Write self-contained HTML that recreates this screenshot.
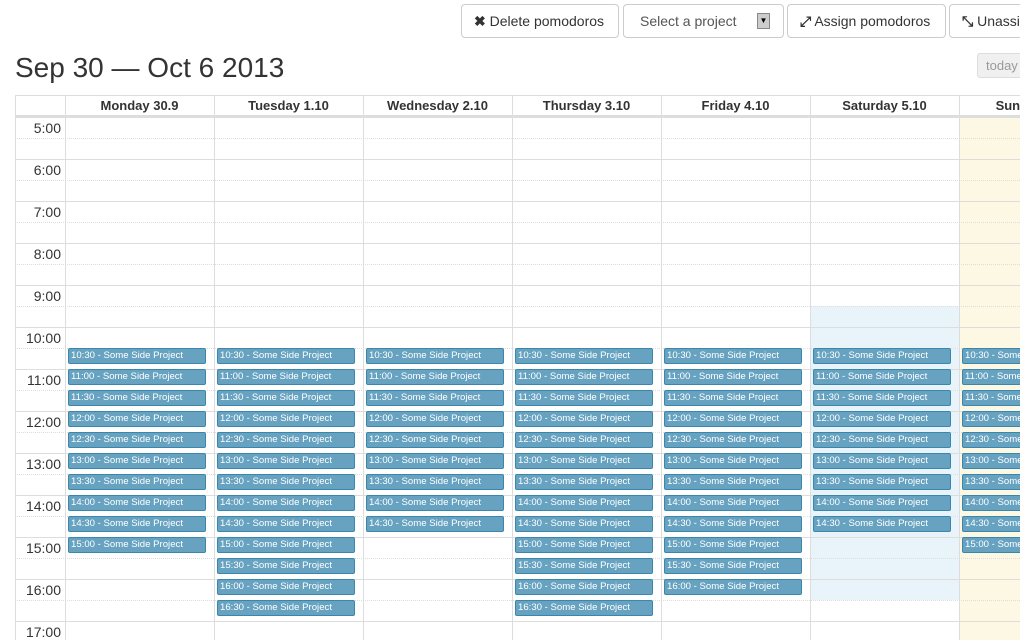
<!DOCTYPE html>
<html><head><meta charset="utf-8"><style>
body{margin:0;width:1020px;height:640px;overflow:hidden;background:#fff;font-family:"Liberation Sans",sans-serif;color:#333;position:relative}
.btn{position:absolute;top:4px;border:1px solid #ccc;border-radius:4px;background:#fff;font-size:14px;line-height:32px;box-sizing:border-box;height:34px;padding-left:12px;white-space:nowrap;overflow:hidden;color:#333}
.abs{position:absolute}
.hd{position:absolute;top:96px;height:20px;font-weight:bold;font-size:13px;text-align:center;line-height:20px;color:#333}
.vl{position:absolute;width:1px;background:#ddd;top:95px;height:545px}
.hl{position:absolute;left:15px;right:0;height:1px;background:#ddd}
.dl{position:absolute;left:15px;right:0;height:0;border-top:1px dotted #ddd}
.tm{position:absolute;left:15px;width:46px;text-align:right;font-size:14px;color:#333}
.ev{position:absolute;height:14px;background:#67a3c1;border:1px solid #3a87ad;border-radius:2px;color:#fff;font-size:9.6px;line-height:14px;padding-left:2px;white-space:nowrap;overflow:hidden;box-sizing:content-box}
</style></head><body>
<div class="btn" style="left:461px;width:158px"><b>&#10006;</b> Delete pomodoros</div>
<div class="btn" style="left:623px;width:161px;padding-left:16px;color:#555">Select a project<span class="abs" style="left:133px;top:8px;width:13px;height:16px;background:#ccc;border:1px solid #888;box-sizing:border-box;font-size:8px;line-height:14px;text-align:center;color:#000">&#9660;</span></div>
<div class="btn" style="left:787px;width:159px"><b>&#10530;</b> Assign pomodoros</div>
<div class="btn" style="left:949px;width:80px"><b>&#10529;</b> Unassign</div>
<div class="abs" style="left:15px;top:52px;font-size:28px;color:#333">Sep 30 — Oct 6 2013</div>
<div class="abs" style="left:977px;top:53px;width:50px;height:25px;background:#f0f0f0;border:1px solid #ddd;border-radius:3px;box-sizing:border-box;color:#999;font-size:13px;line-height:23px;padding-left:8px">today</div>
<div id="g"></div>
<script>
var g=document.getElementById('g'),h='';
var xs=[65,214,363,512,661,810,959],names=['Monday 30.9','Tuesday 1.10','Wednesday 2.10','Thursday 3.10','Friday 4.10','Saturday 5.10','Sunday 6.10'];
h+='<div class="abs" style="left:960px;top:117px;width:60px;height:523px;background:#fcf8e3"></div>';
h+='<div class="abs" style="left:811px;top:306px;width:148px;height:294px;background:#e8f4fa"></div>';
h+='<div class="hl" style="top:95px"></div><div class="hl" style="top:115px;height:3px;background:#ddd"></div>';
for(var i=0;i<12;i++){var y=117+i*42;h+='<div class="hl" style="top:'+(y+42)+'px"></div><div class="dl" style="top:'+(y+21)+'px"></div>';}
for(var i=0;i<13;i++){var y=117+i*42;h+='<div class="tm" style="top:'+(y+3)+'px">'+(5+i)+':00</div>';}
h+='<div class="vl" style="left:15px"></div>';
for(var d=0;d<7;d++){h+='<div class="vl" style="left:'+xs[d]+'px"></div><div class="hd" style="left:'+xs[d]+'px;width:149px">'+names[d]+'</div>';}
var ends=[10,13,9,13,12,9,10];
for(var d=0;d<7;d++)for(var n=0;n<ends[d];n++){var s=21+n,mi=s%2?'30':'00';var t=(Math.floor(s/2))+':'+mi;h+='<div class="ev" style="left:'+(xs[d]+3)+'px;top:'+(348+n*21)+'px;width:134px">'+t+' - Some Side Project</div>';}
g.innerHTML=h;
</script>
</body></html>
